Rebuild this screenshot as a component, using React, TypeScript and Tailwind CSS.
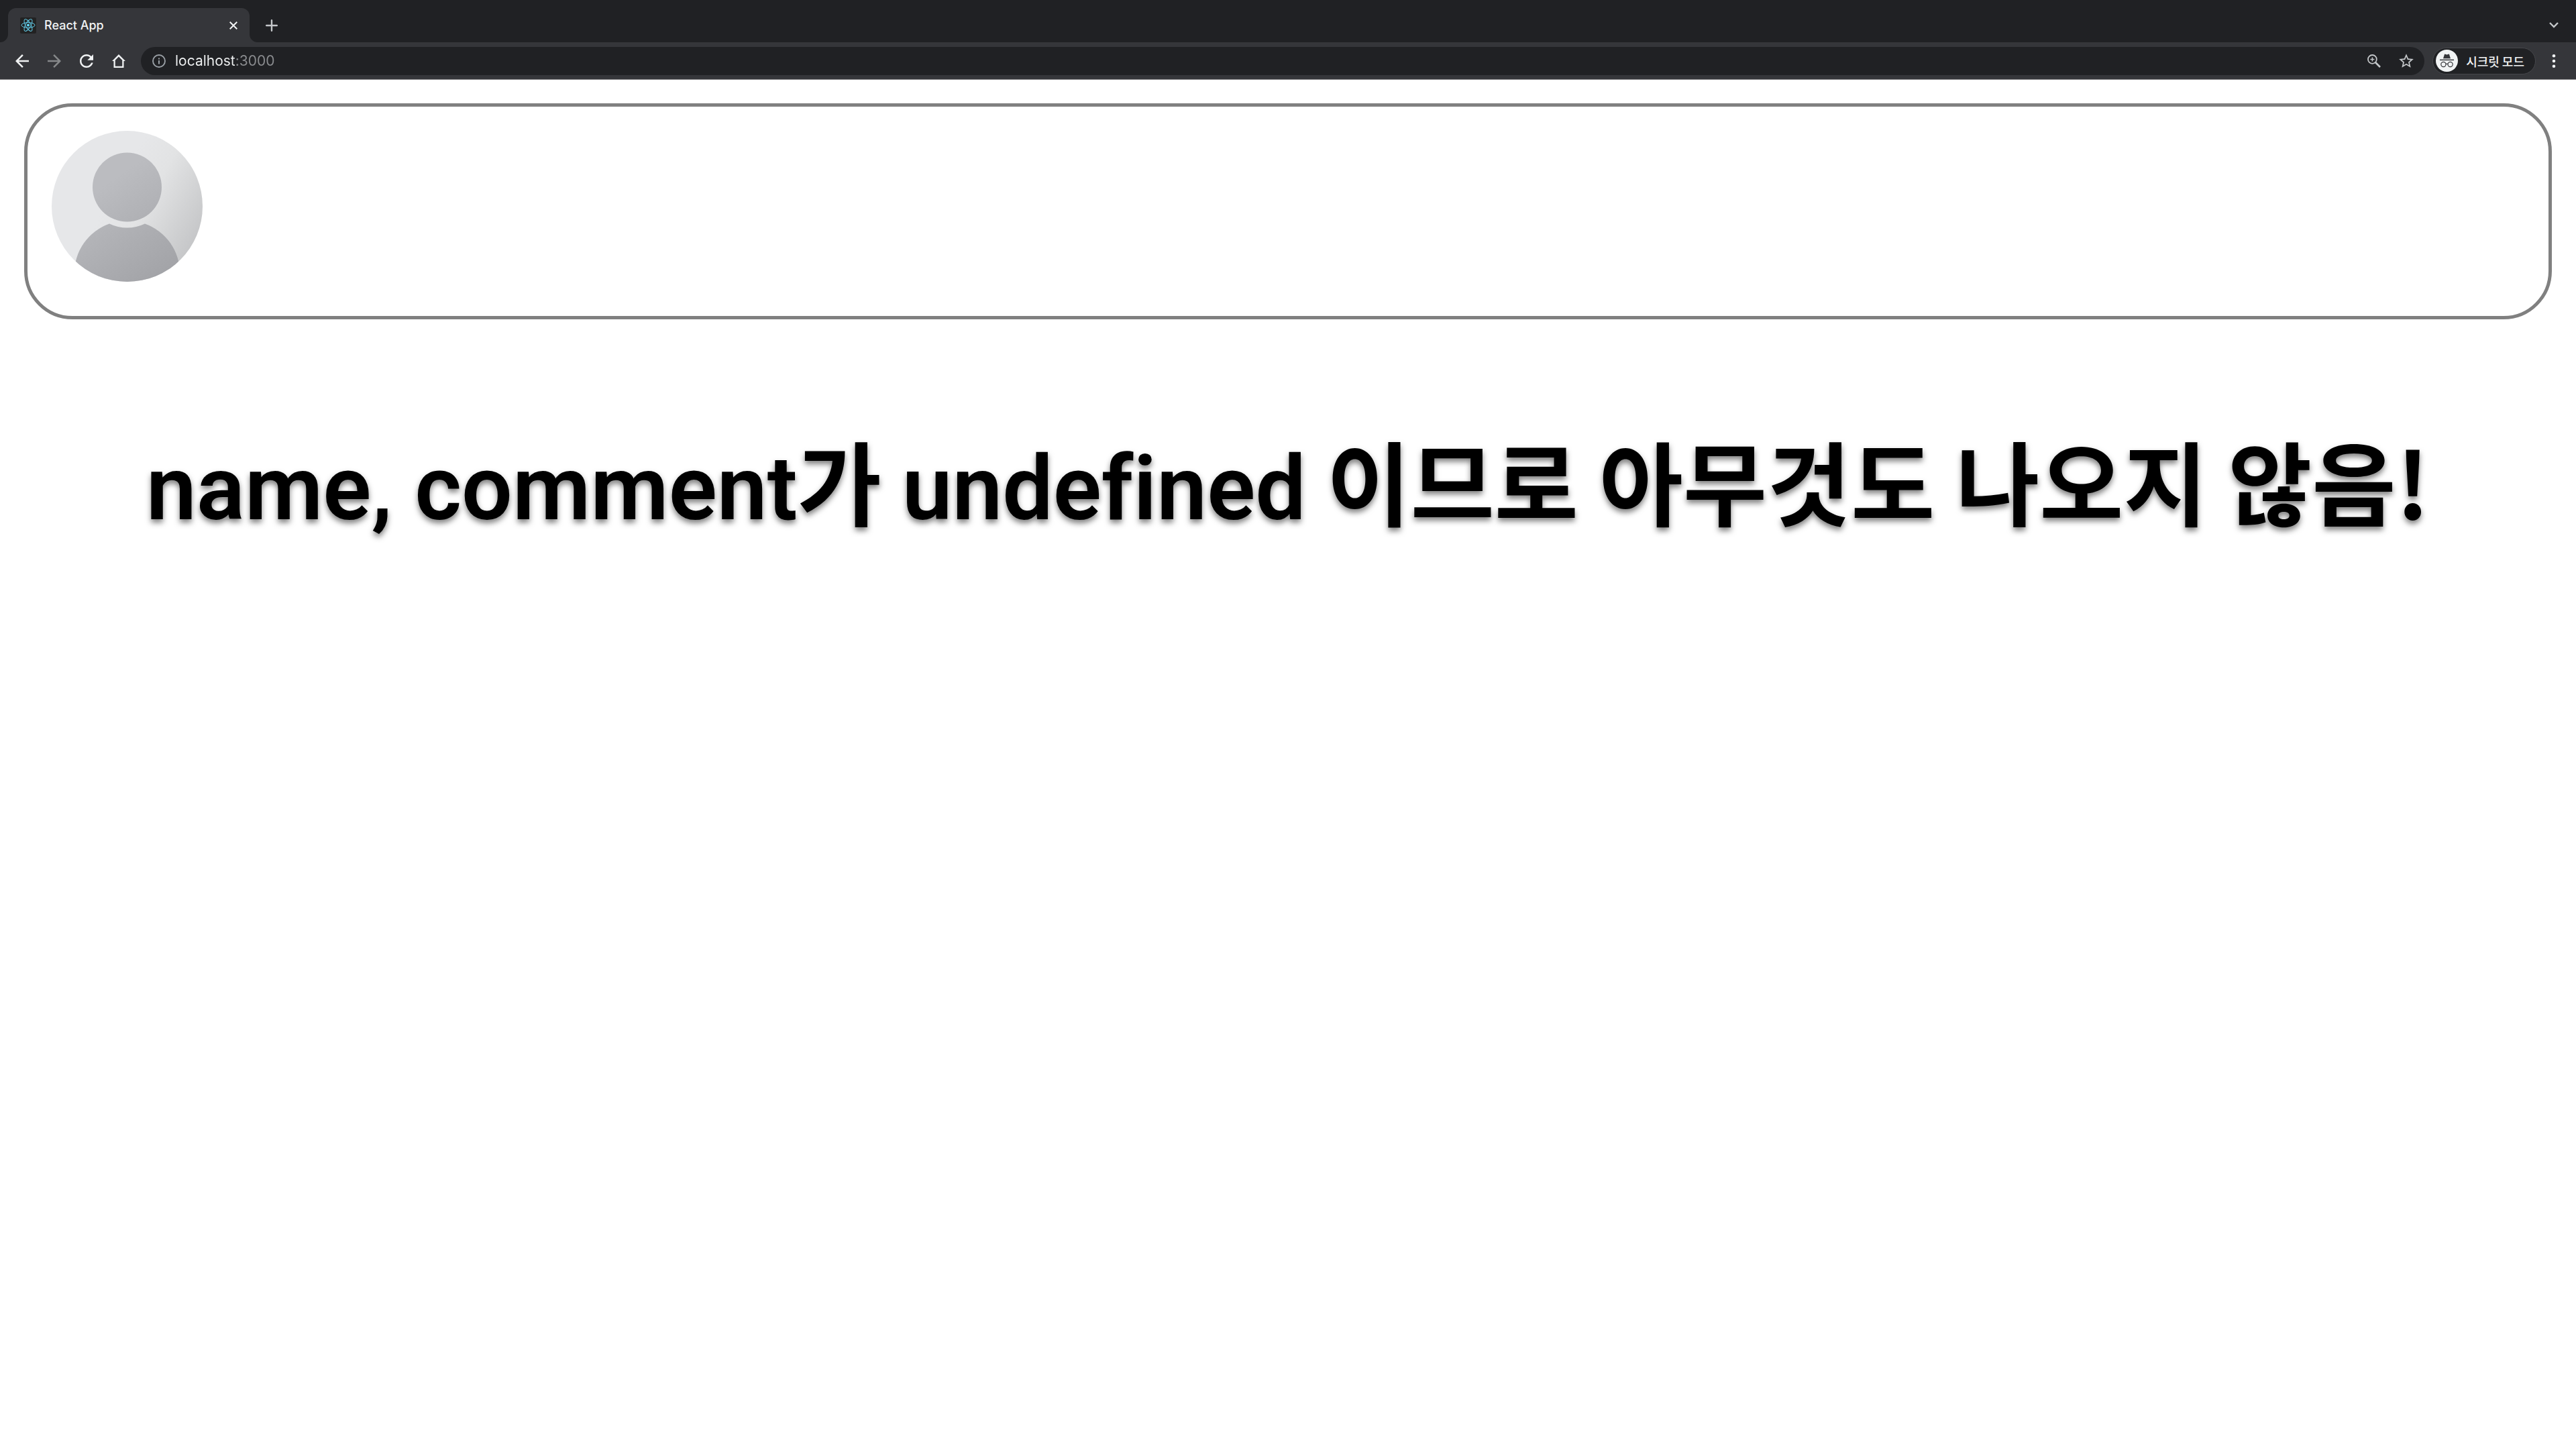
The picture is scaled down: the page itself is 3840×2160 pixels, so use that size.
import { useId } from "react";

function ReactLogo() {
  return (
    <svg viewBox="0 0 24 24" className="size-6 shrink-0" aria-hidden="true">
      <rect width="24" height="24" rx="2" fill="#222222" />
      <g fill="none" stroke="#61c8e4" strokeWidth="1">
        <ellipse cx="12" cy="11.5" rx="10" ry="3.9" />
        <ellipse cx="12" cy="11.5" rx="10" ry="3.9" transform="rotate(60 12 11.5)" />
        <ellipse cx="12" cy="11.5" rx="10" ry="3.9" transform="rotate(120 12 11.5)" />
      </g>
      <circle cx="12" cy="11.5" r="2" fill="#61dafb" />
    </svg>
  );
}

function TabStrip() {
  return (
    <div className="flex h-[63px] items-end bg-[#202124] pl-3">
      <div className="relative flex h-[51px] w-[360px] items-center rounded-t-xl bg-[#35363a] pl-[18px] pr-[14px]">
        <span className="absolute -left-3 bottom-0 size-3 bg-[#35363a]">
          <span className="block size-3 rounded-br-xl bg-[#202124]" />
        </span>
        <span className="absolute -right-3 bottom-0 size-3 bg-[#35363a]">
          <span className="block size-3 rounded-bl-xl bg-[#202124]" />
        </span>
        <ReactLogo />
        <span className="ml-3 flex-1 font-['Inter',sans-serif] text-[18px] font-medium leading-6 text-[#f1f3f4]">React App</span>
        <button type="button" aria-label="Close tab" className="flex size-5 items-center justify-center">
          <svg viewBox="0 0 12 12" className="size-3" fill="none" stroke="#f1f3f4" strokeWidth="2">
            <path d="M0.7 0.7 11.3 11.3M11.3 0.7 0.7 11.3" />
          </svg>
        </button>
      </div>
      <button type="button" aria-label="New tab" className="ml-5 flex h-[51px] w-[26px] items-center justify-center">
        <svg viewBox="0 0 18 18" className="size-[18px]" fill="none" stroke="#c4c7ca" strokeWidth="2.4" strokeLinecap="round">
          <path d="M9 1.2V16.8M1.2 9H16.8" />
        </svg>
      </button>
      <button type="button" aria-label="Search tabs" className="ml-auto mr-[21px] flex h-[51px] w-6 items-center justify-center">
        <svg viewBox="0 0 14 9" className="h-[9px] w-[14px]" fill="none" stroke="#c4c7ca" strokeWidth="2.4">
          <path d="M1 1 7 7 13 1" />
        </svg>
      </button>
    </div>
  );
}

function NavButton({ label, d, color }: { label: string; d: string; color: string }) {
  return (
    <button type="button" aria-label={label} className="flex size-[30px] items-center justify-center">
      <svg viewBox="0 0 24 24" className="size-[30px]" fill={color}>
        <path d={d} />
      </svg>
    </button>
  );
}

function IncognitoBadge() {
  return (
    <svg viewBox="0 0 33 33" className="size-[33px] shrink-0" aria-hidden="true">
      <circle cx="16.5" cy="16.5" r="16.5" fill="#f1f3f4" />
      <path d="M12.9 7.2Q13.2 6.4 14.1 6.7L16.5 7.4 18.9 6.7Q19.8 6.4 20.1 7.2L22 13.3H11Z" fill="#35363a" />
      <rect x="6" y="14.6" width="21" height="1.5" fill="#35363a" />
      <g fill="none" stroke="#35363a" strokeWidth="1.2">
        <circle cx="11.4" cy="22" r="3.6" />
        <circle cx="21.6" cy="22" r="3.6" />
        <path d="M15 21.6Q16.5 20.6 18 21.6" />
      </g>
    </svg>
  );
}

function Toolbar() {
  return (
    <div className="flex h-[56px] items-center border-b border-[#8b8b8d] bg-[#35363a] pl-[18px] pr-[18px]">
      <div className="flex gap-[18px]">
        <NavButton label="Back" color="#f1f3f4" d="M20 11H7.83l5.59-5.59L12 4l-8 8 8 8 1.41-1.41L7.83 13H20v-2z" />
        <NavButton label="Forward" color="#86888a" d="M12 4l-1.41 1.41L16.17 11H4v2h12.17l-5.58 5.59L12 20l8-8z" />
        <NavButton label="Reload" color="#f1f3f4" d="M17.65 6.35C16.2 4.9 14.21 4 12 4c-4.42 0-7.99 3.58-7.99 8s3.57 8 7.99 8c3.73 0 6.84-2.55 7.73-6h-2.08c-.82 2.33-3.04 4-5.65 4-3.31 0-6-2.69-6-6s2.69-6 6-6c1.66 0 3.14.69 4.22 1.78L13 11h7V4l-2.35 2.35z" />
        <NavButton label="Home" color="#f1f3f4" d="M12 4 4 12H6V20H18V12H20ZM12 6.7 16.2 10.9V18.2H7.8V10.9Z" />
      </div>
      <div className="ml-[18px] flex h-[42px] flex-1 items-center rounded-full bg-[#202124] pl-[17px] pr-3">
        <svg viewBox="0 0 20 20" className="size-5 shrink-0" fill="none" stroke="#9aa0a6" strokeWidth="1.9" aria-hidden="true">
          <circle cx="10" cy="10" r="9" />
          <path d="M10 9V14.5M10 5.5V7.4" strokeWidth="2" />
        </svg>
        <input
          type="text"
          aria-label="Address"
          defaultValue="localhost:3000"
          className="ml-[14px] min-w-0 flex-1 bg-[linear-gradient(to_right,#f1f3f4_91px,#8b8d90_91px)] bg-clip-text font-['Inter',sans-serif] text-[21px] leading-7 text-transparent outline-none"
        />
        <button type="button" aria-label="Zoom" className="flex size-[30px] items-center justify-center">
          <svg viewBox="0 0 20 20" className="size-5" fill="none" stroke="#c4c7ca" strokeWidth="1.8">
            <circle cx="7.4" cy="7.4" r="6.4" />
            <path d="M12 12 19 19" strokeWidth="2.6" />
            <path d="M7.4 4.4V10.4M4.4 7.4H10.4" strokeWidth="1.5" />
          </svg>
        </button>
        <button type="button" aria-label="Bookmark" className="ml-[18px] flex size-[30px] items-center justify-center">
          <svg viewBox="0 0 24 24" className="size-[26px]" fill="#c4c7ca">
            <path d="M22 9.24l-7.19-.62L12 2 9.19 8.63 2 9.24l5.46 4.73L5.82 21 12 17.27 18.18 21l-1.63-7.03L22 9.24zM12 15.4l-3.76 2.27 1-4.28-3.32-2.88 4.38-.38L12 6.1l1.71 4.04 4.38.38-3.32 2.88 1 4.28L12 15.4z" />
          </svg>
        </button>
      </div>
      <button type="button" className="ml-3 flex h-10 items-center rounded-full border border-[#46474b] bg-[#202124] pl-1 pr-4 text-[#f1f3f4]">
        <IncognitoBadge />
        <span className="ml-3 font-['Noto_Sans_CJK_KR',sans-serif] text-[18px] font-medium leading-6">시크릿 모드</span>
      </button>
      <button type="button" aria-label="Menu" className="ml-3 flex size-[30px] items-center justify-center">
        <svg viewBox="0 0 6 20" className="h-5 w-[6px]" fill="#f1f3f4">
          <circle cx="3" cy="2.3" r="2.3" />
          <circle cx="3" cy="10" r="2.3" />
          <circle cx="3" cy="17.7" r="2.3" />
        </svg>
      </button>
    </div>
  );
}

function Avatar() {
  const id = useId();
  return (
    <svg viewBox="0 0 225 225" className="size-[225px]" role="img" aria-label="User avatar">
      <defs>
        <linearGradient id={id + "bg"} gradientUnits="userSpaceOnUse" x1="95" y1="85" x2="245" y2="170">
          <stop offset="0" stopColor="#e6e7e9" />
          <stop offset="0.3" stopColor="#e2e3e4" />
          <stop offset="1" stopColor="#bcbdbf" />
        </linearGradient>
        <linearGradient id={id + "fg"} gradientUnits="userSpaceOnUse" x1="80" y1="80" x2="180" y2="225">
          <stop offset="0" stopColor="#bbbcc0" />
          <stop offset="1" stopColor="#a0a1a5" />
        </linearGradient>
        <clipPath id={id + "clip"}>
          <circle cx="112.5" cy="112.5" r="112.5" />
        </clipPath>
      </defs>
      <g clipPath={"url(#" + id + "clip)"}>
        <rect width="225" height="225" fill={"url(#" + id + "bg)"} />
        <circle cx="112.5" cy="84" r="51.5" fill={"url(#" + id + "fg)"} />
        <path d="M86 138.5A61 61 0 0 0 139 138.5A78.8 78.8 0 0 1 191.3 212.7V225H33.7V212.7A78.8 78.8 0 0 1 86 138.5Z" fill={"url(#" + id + "fg)"} />
      </g>
    </svg>
  );
}

export default function App() {
  return (
    <div className="min-h-screen bg-white">
      <header>
        <TabStrip />
        <Toolbar />
      </header>
      <main className="px-9 pt-[35px]">
        <article className="rounded-[72px] border-[5px] border-[#808080] px-9 pb-[51px] pt-9">
          <Avatar />
        </article>
        <p className="mt-[139px] text-center font-['Noto_Sans_CJK_KR',sans-serif] text-[136px] font-bold leading-[200px] text-black [font-variant-ligatures:none] [text-shadow:0_5px_8px_rgba(0,0,0,0.5)]">
          <span className="font-['Roboto',sans-serif] text-[134px] font-semibold">name, comment</span>가{" "}
          <span className="font-['Roboto',sans-serif] text-[134px] font-semibold">undefined</span> 이므로 아무것도 나오지 않음!
        </p>
      </main>
    </div>
  );
}
